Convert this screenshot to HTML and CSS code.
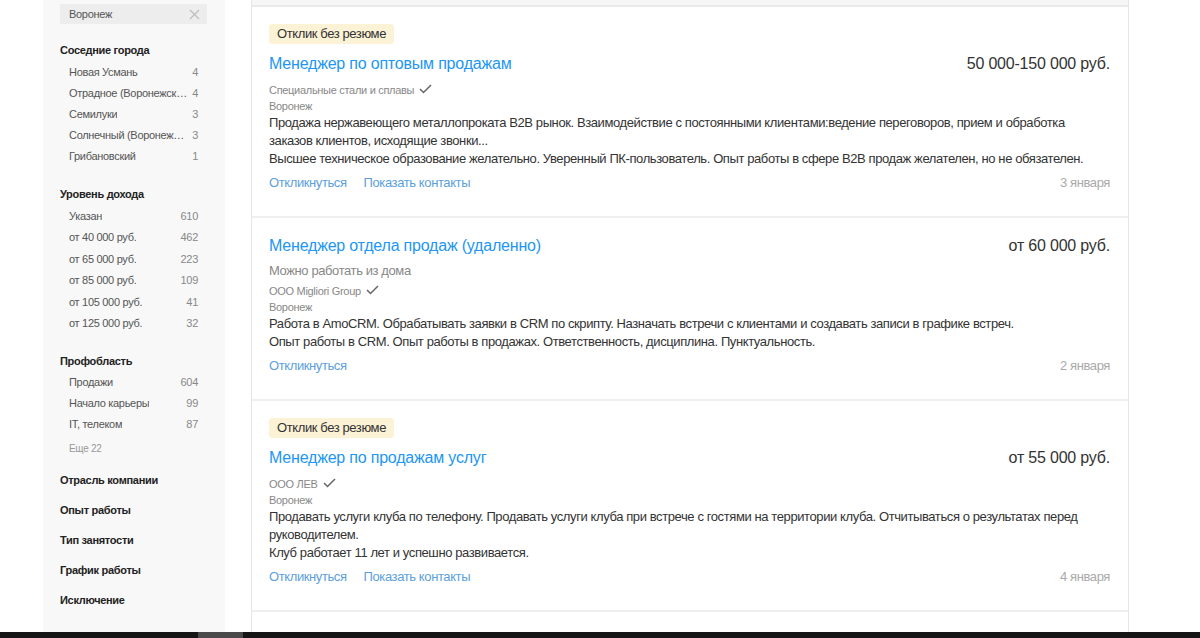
FILE: index.html
```html
<!DOCTYPE html>
<html lang="ru">
<head>
<meta charset="utf-8">
<title>Вакансии</title>
<link rel="stylesheet" href="styles.css">
</head>
<body>
<div class="page">
  <div class="layout">
    <aside class="sidebar">
      <div class="search">
        <span class="search-text">Воронеж</span>
        <svg class="search-clear" width="11" height="11" viewBox="0 0 11 11"><path d="M1 1 L10 10 M10 1 L1 10" stroke="#bdbdbd" stroke-width="1.2" fill="none"/></svg>
      </div>

      <div class="filter first">
        <div class="filter-title">Соседние города</div>
        <ul class="filter-list">
          <li class="filter-item"><span class="name">Новая Усмань</span><span class="count">4</span></li>
          <li class="filter-item"><span class="name">Отрадное (Воронежская область)</span><span class="count">4</span></li>
          <li class="filter-item"><span class="name">Семилуки</span><span class="count">3</span></li>
          <li class="filter-item"><span class="name">Солнечный (Воронежская область)</span><span class="count">3</span></li>
          <li class="filter-item"><span class="name">Грибановский</span><span class="count">1</span></li>
        </ul>
      </div>

      <div class="filter income">
        <div class="filter-title">Уровень дохода</div>
        <ul class="filter-list">
          <li class="filter-item"><span class="name">Указан</span><span class="count">610</span></li>
          <li class="filter-item"><span class="name">от 40 000 руб.</span><span class="count">462</span></li>
          <li class="filter-item"><span class="name">от 65 000 руб.</span><span class="count">223</span></li>
          <li class="filter-item"><span class="name">от 85 000 руб.</span><span class="count">109</span></li>
          <li class="filter-item"><span class="name">от 105 000 руб.</span><span class="count">41</span></li>
          <li class="filter-item"><span class="name">от 125 000 руб.</span><span class="count">32</span></li>
        </ul>
      </div>

      <div class="filter prof">
        <div class="filter-title">Профобласть</div>
        <ul class="filter-list">
          <li class="filter-item"><span class="name">Продажи</span><span class="count">604</span></li>
          <li class="filter-item"><span class="name">Начало карьеры</span><span class="count">99</span></li>
          <li class="filter-item"><span class="name">IT, телеком</span><span class="count">87</span></li>
        </ul>
        <div class="more">Еще 22</div>
      </div>

      <div class="filter collapsed"><div class="filter-title">Отрасль компании</div></div>
      <div class="filter collapsed"><div class="filter-title">Опыт работы</div></div>
      <div class="filter collapsed"><div class="filter-title">Тип занятости</div></div>
      <div class="filter collapsed"><div class="filter-title">График работы</div></div>
      <div class="filter collapsed"><div class="filter-title">Исключение</div></div>
    </aside>

    <main class="results">
      <div class="prev-end"></div>

      <article class="vacancy">
        <span class="badge">Отклик без резюме</span>
        <div class="vacancy-head">
          <a class="vacancy-title" href="#">Менеджер по оптовым продажам</a>
          <span class="salary">50 000-150 000 руб.</span>
        </div>
        <div class="company">Специальные стали и сплавы <svg class="check" width="13" height="10" viewBox="0 0 13 10"><path d="M1 5 L4.5 8.5 L12 1" stroke="#666" stroke-width="1.5" fill="none"/></svg></div>
        <div class="city">Воронеж</div>
        <p class="desc">Продажа нержавеющего металлопроката B2B рынок. Взаимодействие с постоянными клиентами:ведение переговоров, прием и обработка заказов клиентов, исходящие звонки...</p>
        <p class="desc">Высшее техническое образование желательно. Уверенный ПК-пользователь. Опыт работы в сфере B2B продаж желателен, но не обязателен.</p>
        <div class="vacancy-foot">
          <div class="actions"><a href="#">Откликнуться</a><a href="#">Показать контакты</a></div>
          <span class="date">3 января</span>
        </div>
      </article>

      <article class="vacancy">
        <div class="vacancy-head">
          <a class="vacancy-title" href="#">Менеджер отдела продаж (удаленно)</a>
          <span class="salary">от 60 000 руб.</span>
        </div>
        <div class="remote">Можно работать из дома</div>
        <div class="company">ООО Migliori Group <svg class="check" width="13" height="10" viewBox="0 0 13 10"><path d="M1 5 L4.5 8.5 L12 1" stroke="#666" stroke-width="1.5" fill="none"/></svg></div>
        <div class="city">Воронеж</div>
        <p class="desc">Работа в AmoCRM. Обрабатывать заявки в CRM по скрипту. Назначать встречи с клиентами и создавать записи в графике встреч.</p>
        <p class="desc">Опыт работы в CRM. Опыт работы в продажах. Ответственность, дисциплина. Пунктуальность.</p>
        <div class="vacancy-foot">
          <div class="actions"><a href="#">Откликнуться</a></div>
          <span class="date">2 января</span>
        </div>
      </article>

      <article class="vacancy">
        <span class="badge">Отклик без резюме</span>
        <div class="vacancy-head">
          <a class="vacancy-title" href="#">Менеджер по продажам услуг</a>
          <span class="salary">от 55 000 руб.</span>
        </div>
        <div class="company">ООО ЛЕВ <svg class="check" width="13" height="10" viewBox="0 0 13 10"><path d="M1 5 L4.5 8.5 L12 1" stroke="#666" stroke-width="1.5" fill="none"/></svg></div>
        <div class="city">Воронеж</div>
        <p class="desc">Продавать услуги клуба по телефону. Продавать услуги клуба при встрече с гостями на территории клуба. Отчитываться о результатах перед руководителем.</p>
        <p class="desc">Клуб работает 11 лет и успешно развивается.</p>
        <div class="vacancy-foot">
          <div class="actions"><a href="#">Откликнуться</a><a href="#">Показать контакты</a></div>
          <span class="date">4 января</span>
        </div>
      </article>

      <article class="vacancy">
        <div class="vacancy-head">
          <a class="vacancy-title" href="#">Менеджер по продажам</a>
          <span class="salary">85 000-120 000 руб.</span>
        </div>
      </article>
    </main>
  </div>
  <div class="hscroll"><div class="hscroll-thumb"></div></div>
</div>
</body>
</html>
```

FILE: styles.css
```css
* { box-sizing: border-box; }

html, body {
  margin: 0;
  padding: 0;
  background: #fff;
  font-family: "Liberation Sans", Arial, sans-serif;
  color: #333;
}

.page {
  width: 1200px;
  height: 638px;
  display: flex;
  flex-direction: column;
  overflow: hidden;
}

.layout {
  flex: 1;
  min-height: 0;
  display: flex;
  padding-left: 43px;
  overflow: hidden;
}

/* Sidebar */
.sidebar {
  width: 182px;
  flex: 0 0 182px;
  background: #f8f8f8;
  padding: 4px 18px 0 17px;
  font-size: 11px;
  letter-spacing: -0.3px;
}

.search {
  height: 20px;
  background: #ededed;
  display: flex;
  align-items: center;
  justify-content: space-between;
  padding: 0 7px 0 9px;
  margin-bottom: 16px;
}

.search-text {
  color: #555;
  font-size: 11px;
}

.filter { margin-bottom: 16px; }
.filter.first { margin-bottom: 17px; }
.filter.collapsed { margin-bottom: 9px; }

.filter-title {
  font-weight: bold;
  color: #222;
  line-height: 21px;
}

.first .filter-title { margin-bottom: 1px; }
.income .filter-title { margin-bottom: 1px; }
.income { margin-bottom: 17px; }
.prof .filter-title { margin-bottom: 0; }

.filter-list {
  list-style: none;
  margin: 0;
  padding: 0 9px 0 9px;
}

.filter-item {
  display: flex;
  justify-content: space-between;
  line-height: 21px;
  color: #555;
}

.income .filter-item { line-height: 21.4px; }

.filter-item .name {
  white-space: nowrap;
  overflow: hidden;
  text-overflow: ellipsis;
  max-width: 120px;
}

.filter-item .count {
  color: #888;
  padding-left: 4px;
}

.more {
  padding-left: 9px;
  font-size: 10px;
  color: #999;
  line-height: 26px;
  margin-top: 1px;
  margin-bottom: -8px;
}

/* Results */
.results {
  margin-left: 26px;
  width: 878px;
  flex: 0 0 878px;
  border-left: 1px solid #e6e6e6;
  border-right: 1px solid #e6e6e6;
  letter-spacing: -0.4px;
}

.prev-end {
  height: 7px;
  background: #f6f6f6;
  border-bottom: 2px solid #e9e9e9;
}

.vacancy {
  padding: 17px 18px 24px 17px;
  border-bottom: 2px solid #efefef;
}

.badge {
  display: inline-block;
  height: 20px;
  line-height: 20px;
  padding: 0 8px;
  background: #fcf2d6;
  border-radius: 3px;
  font-size: 13px;
  color: #333;
  margin-bottom: 9px;
}

.vacancy-head {
  display: flex;
  justify-content: space-between;
  align-items: baseline;
  line-height: 22px;
  margin-bottom: 7px;
  letter-spacing: -0.2px;
}

.vacancy-title {
  font-size: 16px;
  color: #2196f3;
  text-decoration: none;
}

.salary {
  font-size: 16px;
  color: #333;
}

.remote {
  font-size: 13px;
  color: #888;
  line-height: 14px;
  margin-top: 2px;
  margin-bottom: 5px;
}

.company {
  font-size: 11px;
  color: #888;
  line-height: 16px;
  display: flex;
  align-items: center;
  gap: 5px;
  letter-spacing: -0.3px;
}

.check { display: block; margin-top: -3px; }

.city {
  font-size: 11px;
  color: #888;
  line-height: 16px;
  letter-spacing: -0.3px;
}

.desc {
  margin: 0;
  font-size: 13px;
  line-height: 18px;
  color: #333;
}

.vacancy-foot {
  display: flex;
  justify-content: space-between;
  align-items: baseline;
  line-height: 18px;
  margin-top: 6px;
  font-size: 13px;
}

.actions {
  display: flex;
  gap: 17px;
}

.actions a {
  color: #5d9fdc;
  text-decoration: none;
}

.date { color: #aaa; }

/* horizontal scrollbar strip */
.hscroll {
  height: 6px;
  flex: 0 0 6px;
  background: #151515;
  display: flex;
}

.hscroll-thumb {
  width: 45px;
  margin-left: 198px;
  background: #4a4a4a;
}
```
